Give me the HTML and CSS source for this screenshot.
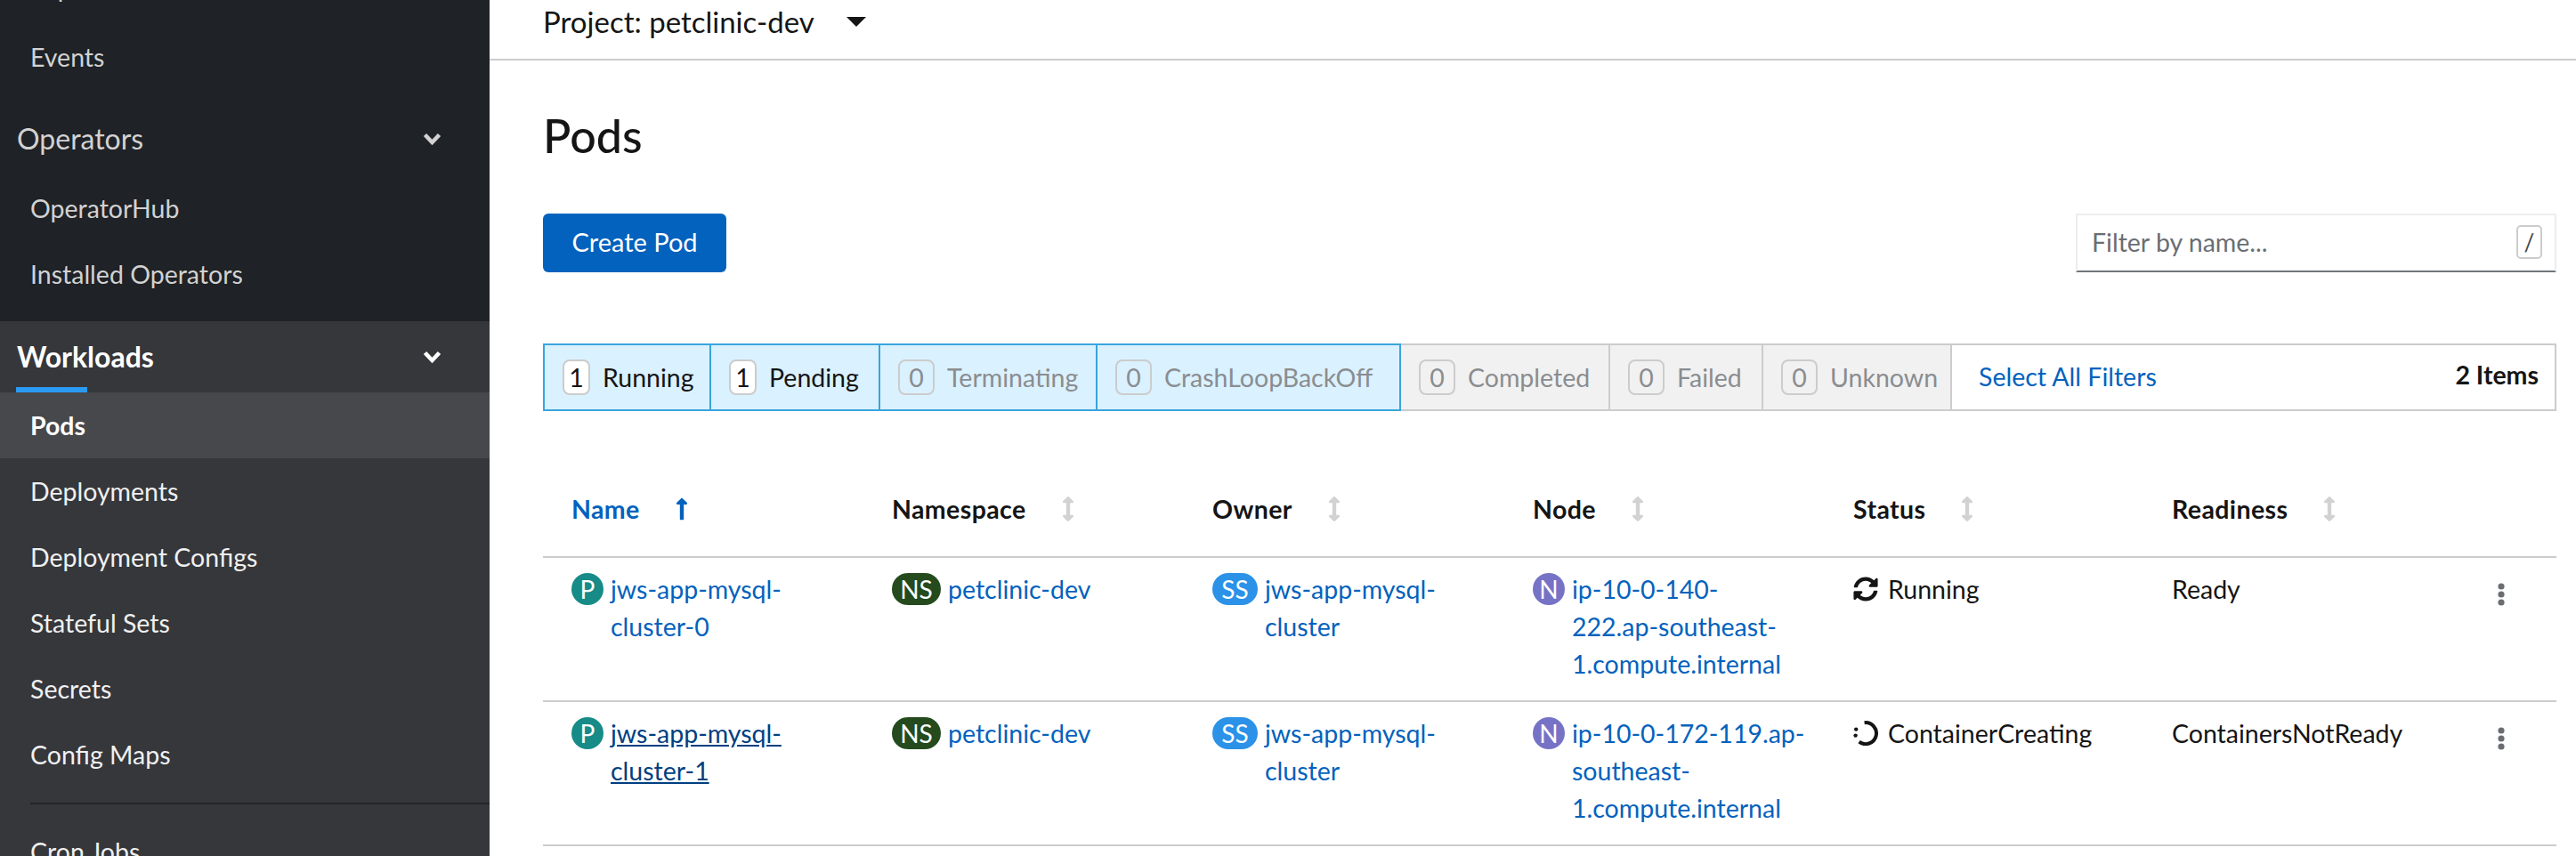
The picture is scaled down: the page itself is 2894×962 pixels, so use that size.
FILE: index.html
```html
<!DOCTYPE html>
<html lang="en">
<head>
<meta charset="utf-8">
<title>Pods</title>
<link rel="stylesheet" href="styles.css">
</head>
<body>
<svg class="defs" width="0" height="0" aria-hidden="true">
  <symbol id="i-sort" viewBox="0 0 256 512"><path d="M214.059 377.941H168V134.059h46.059c21.382 0 32.09-25.851 16.971-40.971L144.971 7.029c-9.373-9.373-24.568-9.373-33.941 0L24.971 93.088c-15.119 15.119-4.411 40.971 16.971 40.971H88v243.882H41.941c-21.382 0-32.09 25.851-16.971 40.971l86.059 86.059c9.373 9.373 24.568 9.373 33.941 0l86.059-86.059c15.12-15.119 4.412-40.971-16.97-40.971z"/></symbol>
  <symbol id="i-up" viewBox="0 0 256 512"><path d="M88 166.059V468c0 6.627 5.373 12 12 12h56c6.627 0 12-5.373 12-12V166.059h46.059c21.382 0 32.09-25.851 16.971-40.971l-86.059-86.059c-9.373-9.373-24.569-9.373-33.941 0l-86.059 86.059c-15.119 15.119-4.411 40.971 16.97 40.971H88z"/></symbol>
  <symbol id="i-sync" viewBox="0 0 512 512"><path d="M370.72 133.28C339.458 104.008 298.888 87.962 255.848 88c-77.458.068-144.328 53.178-162.791 126.85-1.344 5.363-6.122 9.15-11.651 9.15H24.103c-7.498 0-13.194-6.807-11.807-14.176C33.933 94.924 134.813 8 256 8c66.448 0 126.791 26.136 171.315 68.685L463.03 40.97C478.149 25.851 504 36.559 504 57.941V192c0 13.255-10.745 24-24 24H345.941c-21.382 0-32.09-25.851-16.971-40.971l41.75-41.749zM32 296h134.059c21.382 0 32.09 25.851 16.971 40.971l-41.75 41.75c31.262 29.273 71.835 45.319 114.876 45.28 77.418-.07 144.315-53.144 162.787-126.849 1.344-5.363 6.122-9.15 11.651-9.15h57.304c7.498 0 13.194 6.807 11.807 14.176C478.067 417.076 377.187 504 256 504c-66.448 0-126.791-26.136-171.315-68.685L48.97 471.03C33.851 486.149 8 475.441 8 454.059V320c0-13.255 10.745-24 24-24z"/></symbol>
  <symbol id="i-chev" viewBox="0 0 21 15"><path d="M2.5 2.5 10.5 11l8-8.5" fill="none" stroke="currentColor" stroke-width="4.6"/></symbol>
  <symbol id="i-kebab" viewBox="0 0 8 26"><circle cx="4" cy="4" r="3.6"/><circle cx="4" cy="13" r="3.6"/><circle cx="4" cy="22" r="3.6"/></symbol>
</svg>

<div class="app">
  <nav class="sidebar">
    <div class="nav-scroll">
      <section class="nav-group">
        <a class="nav-item nav-item-clipped">Explore</a>
        <a class="nav-item">Events</a>
        <div class="nav-head">Operators <svg class="chev"><use href="#i-chev"/></svg></div>
        <a class="nav-item">OperatorHub</a>
        <a class="nav-item">Installed Operators</a>
      </section>
      <section class="nav-group nav-group-active">
        <div class="nav-head nav-head-active"><span class="nav-head-label">Workloads</span> <svg class="chev"><use href="#i-chev"/></svg></div>
        <a class="nav-item nav-item-current">Pods</a>
        <a class="nav-item">Deployments</a>
        <a class="nav-item">Deployment Configs</a>
        <a class="nav-item">Stateful Sets</a>
        <a class="nav-item">Secrets</a>
        <a class="nav-item">Config Maps</a>
        <hr class="nav-divider">
        <a class="nav-item">Cron Jobs</a>
      </section>
    </div>
  </nav>

  <main class="main">
    <header class="project-bar">
      <span class="project-name">Project: petclinic-dev</span>
      <span class="caret"></span>
    </header>
    <div class="content">
      <h1 class="title">Pods</h1>
      <div class="actions">
        <button class="btn-primary">Create Pod</button>
        <div class="filter-input">
          <span class="placeholder">Filter by name...</span>
          <kbd class="slash">/</kbd>
        </div>
      </div>

      <div class="status-bar">
        <div class="chip chip-on"><span class="count count-live">1</span><span>Running</span></div>
        <div class="chip chip-on"><span class="count count-live">1</span><span>Pending</span></div>
        <div class="chip chip-on chip-zero"><span class="count">0</span><span>Terminating</span></div>
        <div class="chip chip-on chip-zero"><span class="count">0</span><span>CrashLoopBackOff</span></div>
        <div class="chip chip-off chip-zero"><span class="count">0</span><span>Completed</span></div>
        <div class="chip chip-off chip-zero"><span class="count">0</span><span>Failed</span></div>
        <div class="chip chip-off chip-zero"><span class="count">0</span><span>Unknown</span></div>
        <div class="bar-end">
          <a class="link">Select All Filters</a>
          <strong class="items">2 Items</strong>
        </div>
      </div>

      <div class="table">
        <div class="row row-head">
          <div class="th th-sorted">Name <svg class="sort sort-up"><use href="#i-up"/></svg></div>
          <div class="th">Namespace <svg class="sort"><use href="#i-sort"/></svg></div>
          <div class="th">Owner <svg class="sort"><use href="#i-sort"/></svg></div>
          <div class="th">Node <svg class="sort"><use href="#i-sort"/></svg></div>
          <div class="th">Status <svg class="sort"><use href="#i-sort"/></svg></div>
          <div class="th">Readiness <svg class="sort"><use href="#i-sort"/></svg></div>
          <div></div>
        </div>

        <div class="row">
          <div class="cell res"><span class="badge b-pod">P</span><a class="link">jws-app-mysql-<br>cluster-0</a></div>
          <div class="cell res"><span class="badge b-ns">NS</span><a class="link">petclinic-dev</a></div>
          <div class="cell res"><span class="badge b-ss">SS</span><a class="link">jws-app-mysql-<br>cluster</a></div>
          <div class="cell res"><span class="badge b-node">N</span><a class="link">ip-10-0-140-<br>222.ap-southeast-<br>1.compute.internal</a></div>
          <div class="cell status"><svg class="st-icon"><use href="#i-sync"/></svg>Running</div>
          <div class="cell">Ready</div>
          <div class="cell kebab"><svg class="kebab-icon"><use href="#i-kebab"/></svg></div>
        </div>

        <div class="row">
          <div class="cell res"><span class="badge b-pod">P</span><a class="link link-hover">jws-app-mysql-<br>cluster-1</a></div>
          <div class="cell res"><span class="badge b-ns">NS</span><a class="link">petclinic-dev</a></div>
          <div class="cell res"><span class="badge b-ss">SS</span><a class="link">jws-app-mysql-<br>cluster</a></div>
          <div class="cell res"><span class="badge b-node">N</span><a class="link">ip-10-0-172-119.ap-<br>southeast-<br>1.compute.internal</a></div>
          <div class="cell status">
            <svg class="st-icon" viewBox="0 0 28 28"><path d="M12.6 2.2A12 12 0 1 1 6.6 23.6" fill="none" stroke="currentColor" stroke-width="4"/><circle cx="3.2" cy="9.6" r="2.2"/><circle cx="2.6" cy="16.6" r="2.2"/></svg>ContainerCreating
          </div>
          <div class="cell">ContainersNotReady</div>
          <div class="cell kebab"><svg class="kebab-icon"><use href="#i-kebab"/></svg></div>
        </div>
      </div>
    </div>
  </main>
</div>
</body>
</html>
```

FILE: styles.css
```css
* { box-sizing: border-box; }
html, body { margin: 0; height: 100%; overflow: hidden; }
body {
  font-family: "Lato", "Noto Sans", sans-serif;
  font-size: 28.5px;
  line-height: 42px;
  color: #151515;
  background: #fff;
}
.defs { position: absolute; }
.app { display: flex; height: 962px; overflow: hidden; }

/* Sidebar */
.sidebar { width: 550px; flex: none; background: #1f2226; overflow: hidden; }
.nav-scroll { margin-top: -51px; }
.nav-group { padding-bottom: 16px; }
.nav-group-active { background: #36373b; padding-bottom: 0; }
.nav-item {
  display: flex; align-items: center; height: 74px; padding-left: 34px;
  color: #d2d2d2;
}
.nav-item-clipped { margin-bottom: 4px; }
.nav-group-active .nav-item { color: #f0f0f0; }
.nav-group-active .nav-item-current { background: #47484c; color: #fff; font-weight: 700; }
.nav-head {
  display: flex; align-items: center; justify-content: space-between;
  height: 96px; padding: 14px 54px 0 19px;
  font-size: 32px; color: #d2d2d2;
}
.nav-head-active { height: 80px; padding-top: 0; color: #fff; font-weight: 700; position: relative; }
.nav-head-active::after {
  content: ""; position: absolute; left: 18px; bottom: 0; width: 80px; height: 6px; background: #2b9af3;
}
.chev { width: 21px; height: 15px; color: #d2d2d2; }
.nav-head-active .chev { color: #fff; }
.nav-divider { border: 0; height: 2px; background: #212427; margin: 17px 0 16px 34px; }

/* Main */
.main { flex: 1; min-width: 0; }
.project-bar {
  display: flex; align-items: center; height: 68px; padding: 0 0 18px 60px;
  border-bottom: 2px solid #ccc; font-size: 33px;
}
.caret {
  width: 0; height: 0; margin-left: 36px;
  border-left: 11px solid transparent; border-right: 11px solid transparent; border-top: 11px solid #151515;
}
.content { padding: 0 22px 0 60px; }
.title { margin: 50px 0 0; font-size: 52px; line-height: 68px; font-weight: 500; }
.actions { display: flex; justify-content: space-between; margin-top: 54px; }
.btn-primary {
  width: 206px; height: 66px; border: 0; border-radius: 6px; padding: 0 0 2px;
  background: #0362bd; color: #fff; font: inherit; font-size: 29px;
}
.filter-input {
  width: 540px; height: 66px; display: flex; align-items: center; justify-content: space-between;
  padding: 0 14px 2px 16px; border: 2px solid #ededed; border-bottom-color: #72767b;
}
.placeholder { color: #6a6e73; }
.slash {
  width: 29px; height: 38px; display: flex; align-items: center; justify-content: center;
  border: 2px solid #ccc; border-radius: 5px; font: inherit; font-size: 26px; color: #444;
}

/* Status filters */
.status-bar {
  display: grid; grid-template-columns: 189px 190px 244px 341px 235px 172px 212px 1fr;
  height: 76px; margin-top: 80px;
}
.chip {
  display: flex; align-items: center; gap: 14px; padding-left: 20px;
  border: 2px solid #ccc; border-left-width: 0;
}
.chip-on { background: #daf1ff; border-color: #39a5dc; }
.chip-on:first-child { border-left-width: 2px; }
.chip-on + .chip-on { border-left-width: 0; }
.chip-off { background: #f1f1f1; }
.chip-zero { color: #8a8d90; }
.count {
  display: flex; align-items: center; justify-content: center;
  width: 41px; height: 40px;
  border: 2px solid #ccc; border-radius: 8px;
}
.count-live { width: 31px; background: #fff; color: #151515; }
.bar-end {
  display: flex; align-items: center; justify-content: space-between;
  padding: 0 18px 2px 30px; border: 2px solid #ccc; border-left-width: 0;
}
.items { font-weight: 700; margin-bottom: 4px; }
.link { color: #0362bd; }
.link-hover { color: #004080; text-decoration: underline; }

/* Table */
.table { margin-top: 71px; }
.row {
  display: grid; grid-template-columns: repeat(4, 360px) 358px 374px 90px;
  border-bottom: 2px solid #ccc; padding: 14px 0 20px; height: 162px;
}
.row-head { height: 94px; padding: 0 0 14px; align-items: center; }
.th { padding-left: 32px; font-weight: 700; display: flex; align-items: center; letter-spacing: .4px; }
.th-sorted { color: #0362bd; }
.sort { width: 14px; height: 28px; margin-left: 40px; fill: #d2d2d2; }
.sort-up { fill: #0362bd; }
.cell { padding-left: 32px; padding-right: 24px; }
.res { display: flex; align-items: flex-start; gap: 8px; white-space: nowrap; }
.badge {
  flex: none; display: flex; align-items: center; justify-content: center;
  width: 36px; height: 36px; margin-top: 3px;
  border-radius: 18px; color: #fff; font-size: 28px; line-height: 36px;
}
.b-pod { background: #168b87; }
.b-ns { background: #244a1e; width: 55px; }
.b-ss { background: #2b92e8; width: 51px; }
.b-node { background: #7673c6; }
.status { display: flex; align-items: flex-start; gap: 11px; }
.st-icon { flex: none; width: 28px; height: 28px; margin-top: 7px; fill: currentColor; }
.kebab { padding: 0; }
.kebab-icon { display: block; width: 8px; height: 26px; margin: 14px 0 0 24px; fill: #6a6e73; }
```
